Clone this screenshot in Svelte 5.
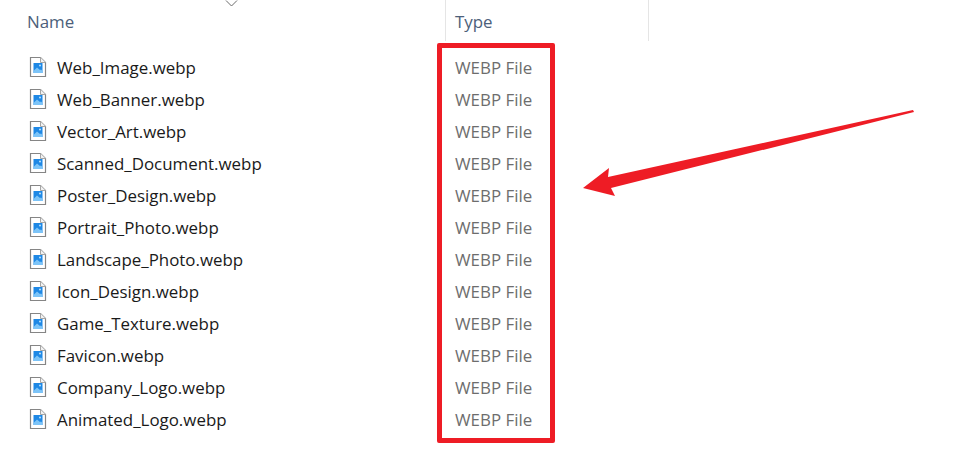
<script>
  const files = [
    "Web_Image.webp",
    "Web_Banner.webp",
    "Vector_Art.webp",
    "Scanned_Document.webp",
    "Poster_Design.webp",
    "Portrait_Photo.webp",
    "Landscape_Photo.webp",
    "Icon_Design.webp",
    "Game_Texture.webp",
    "Favicon.webp",
    "Company_Logo.webp",
    "Animated_Logo.webp"
  ];
</script>

<main>
  <svg class="sort" width="14" height="8" viewBox="0 0 14 8">
    <path d="M1 0.5 L6.5 6 L12 0.5" fill="none" stroke="#6b6b6b" stroke-width="1" />
  </svg>

  <div class="header">
    <div class="col-name">Name</div>
    <div class="col-type">Type</div>
  </div>

  <div class="rows">
    {#each files as file}
      <div class="row">
        <div class="name">
          <svg class="icon" width="18" height="22" viewBox="0 0 18 22">
            <path d="M1.5 1.5 H11.5 L16.5 6.5 V20.5 H1.5 Z" fill="#fff" stroke="#858585" stroke-width="1.2" />
            <path d="M11.5 1.5 V6.5 H16.5" fill="#f2f2f2" stroke="#a5a5a5" stroke-width="1" />
            <rect x="4.5" y="7" width="9" height="10" fill="#1e88e5" />
            <path d="M4.5 15 L8 11.5 L11 14 L12 13.5 L13.5 15 V17 H4.5 Z" fill="#7cc4f8" />
            <circle cx="11" cy="9.5" r="1" fill="#bfe3fb" />
          </svg>
          <span>{file}</span>
        </div>
        <div class="type">WEBP File</div>
      </div>
    {/each}
  </div>

  <div class="highlight"></div>

  <svg class="arrow" width="960" height="468" viewBox="0 0 960 468">
    <path d="M913 110 L914 112 L611 188 L615 196 L583 188 L609 168 L608 177 Z" fill="#ee1c25" />
  </svg>
</main>

<style>
  :global(body) {
    margin: 0;
    background: #fff;
  }
  main {
    position: relative;
    width: 960px;
    height: 468px;
    overflow: hidden;
    font-family: "Open Sans", "Noto Sans", sans-serif;
    font-size: 16.9px;
  }
  .sort {
    position: absolute;
    left: 225px;
    top: 0;
  }
  .header {
    display: flex;
    height: 41px;
    color: #4c607a;
  }
  .col-name {
    width: 418px;
    padding: 10px 0 0 27px;
    border-right: 1px solid #e5e5e5;
  }
  .col-type {
    width: 193px;
    padding: 10px 0 0 9px;
    border-right: 1px solid #e5e5e5;
  }
  .rows {
    padding-top: 10px;
  }
  .row {
    display: flex;
    align-items: center;
    height: 32px;
  }
  .name {
    display: flex;
    align-items: center;
    gap: 10px;
    width: 446px;
    padding-left: 29px;
    box-sizing: border-box;
    color: #1a1a1a;
  }
  .icon {
    flex: none;
  }
  .type {
    padding-left: 9px;
    color: #6d6d6d;
  }
  .highlight {
    position: absolute;
    left: 437px;
    top: 43px;
    width: 118px;
    height: 400px;
    box-sizing: border-box;
    border: 5px solid #ee1c25;
    border-radius: 2px;
  }
  .arrow {
    position: absolute;
    left: 0;
    top: 0;
  }
</style>
